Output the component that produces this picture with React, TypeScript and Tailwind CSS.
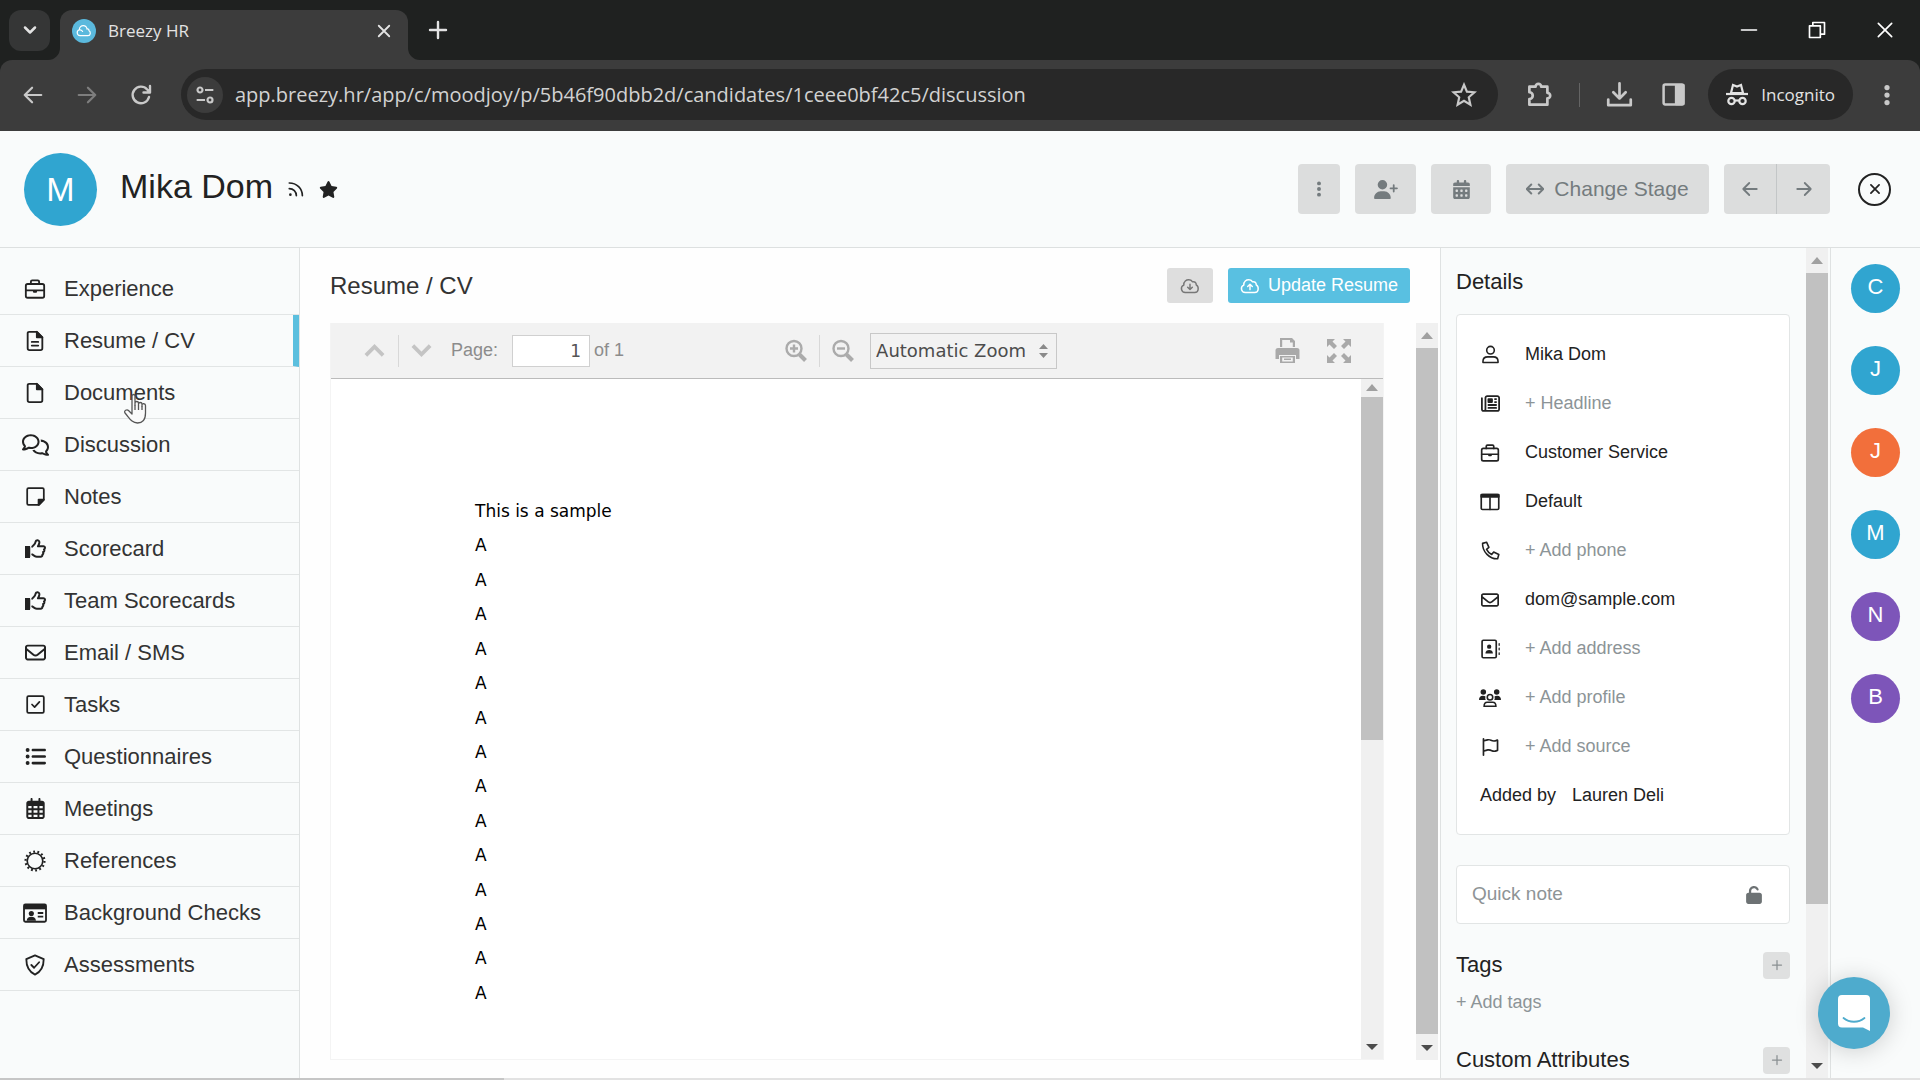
import type { ReactNode } from "react";
import {
  FaRegComments,
  FaRegThumbsUp,
  FaRegEnvelope,
  FaRegCalendarDays,
  FaCalendarDays,
  FaListUl,
  FaRegNewspaper,
  FaRegFlag,
  FaUserPlus,
  FaUnlock,
  FaStar,
  FaEllipsisVertical,
} from "react-icons/fa6";

interface IconProps {
  className?: string;
}

interface LineIconProps extends IconProps {
  children: ReactNode;
  width?: number;
}

// Outlined icons share one 24x24 frame
function LineIcon({ className = "w-6 h-6", children, width = 2 }: Readonly<LineIconProps>) {
  return (
    <svg
      className={className}
      viewBox="0 0 24 24"
      fill="none"
      stroke="currentColor"
      strokeWidth={width}
      strokeLinecap="round"
      strokeLinejoin="round"
      aria-hidden="true"
    >
      {children}
    </svg>
  );
}

const Briefcase = ({ className }: IconProps) => (
  <LineIcon className={className}>
    <rect x="2" y="6.5" width="20" height="15" rx="2" />
    <path d="M7.5 6.5V4A1.5 1.5 0 0 1 9 2.5h6A1.5 1.5 0 0 1 16.5 4v2.5M2 13.5h20" />
    <path d="M9.8 13.5h4.4v1.500a1 1 0 0 1-1 1h-2.400a1 1 0 0 1-1-1z" fill="currentColor" stroke="none" />
  </LineIcon>
);

const FileIcon = ({ className, lines }: IconProps & { lines?: boolean }) => (
  <LineIcon className={className}>
    <path d="M5.5 2H14l6 6v12a2 2 0 0 1-2 2H6a2 2 0 0 1-2-2V3.5A1.5 1.5 0 0 1 5.5 2z" />
    <path d="M14 2v6h6z" fill="currentColor" />
    {lines && <path d="M8.5 13h7M8.5 17h7" />}
  </LineIcon>
);

const NoteIcon = ({ className }: IconProps) => (
  <LineIcon className={className}>
    <path d="M4 2.5h16A1.5 1.5 0 0 1 21.5 4v12L16 21.5H4A1.5 1.5 0 0 1 2.5 20V4A1.5 1.5 0 0 1 4 2.5z" />
    <path d="M15.5 15.5h6l-6 6z" fill="currentColor" />
  </LineIcon>
);

// Outlined hand with a solid cuff
const ThumbIcon = () => (
  <span className="relative flex">
    <FaRegThumbsUp className="h-[21px] w-[21px]" />
    <span className="absolute bottom-px left-0 h-3 w-[5px] bg-current" />
  </span>
);

const TaskIcon = ({ className }: IconProps) => (
  <LineIcon className={className}>
    <rect x="2.5" y="2.5" width="19" height="19" rx="1.5" />
    <path d="m8 12 3 3 5.5-6" />
  </LineIcon>
);

// Toothed ring
const BadgeIcon = ({ className }: IconProps) => (
  <svg className={className} viewBox="0 0 24 24" fill="none" stroke="currentColor" aria-hidden="true">
    <circle cx="12" cy="12" r="8.5" strokeWidth="1.8" />
    <circle cx="12" cy="12" r="10.3" strokeWidth="2.4" strokeDasharray="2 2.623" />
  </svg>
);

const IdCardIcon = ({ className }: IconProps) => (
  <svg className={className} viewBox="0 0 28 24" fill="none" stroke="currentColor" strokeWidth="2" aria-hidden="true">
    <rect x="2" y="2.5" width="24" height="19" rx="1.5" />
    <path d="M2 3h24v5H2z" fill="currentColor" stroke="none" />
    <circle cx="10" cy="12.5" r="2.8" fill="currentColor" stroke="none" />
    <path d="M5 20.5c0-3 2-4.5 5-4.5s5 1.5 5 4.5z" fill="currentColor" stroke="none" />
    <path d="M17 12h6M17 16h6" />
  </svg>
);

const ShieldIcon = ({ className }: IconProps) => (
  <LineIcon className={className}>
    <path d="M12 1.5 21.5 5.500c0 8-3 14-9.500 17-6.500-3-9.500-9-9.500-17z" />
    <path d="m8 12 3 3 5.5-6" />
  </LineIcon>
);

const PersonIcon = ({ className }: IconProps) => (
  <LineIcon className={className}>
    <circle cx="12" cy="6.5" r="4.8" />
    <path d="M2.5 22v-1.5c0-3.5 2.5-5.5 6-5.500h7c3.500 0 6 2 6 5.500V22z" />
  </LineIcon>
);

const ColumnsIcon = ({ className }: IconProps) => (
  <LineIcon className={className}>
    <rect x="1.5" y="3" width="21" height="18" rx="1.5" />
    <path d="M1.5 3h21v3h-21z" fill="currentColor" />
    <path d="M12 7v14" />
  </LineIcon>
);

const PhoneIcon = ({ className }: IconProps) => (
  <LineIcon className={className}>
    <path d="M2 3 7 1.5 10 8 7 10.5c1.5 3 3.5 5 6.5 6.500L16 14l6.500 3L21 22.500C11 23 1.500 13.500 2 3z" />
  </LineIcon>
);

const ContactIcon = ({ className }: IconProps) => (
  <LineIcon className={className}>
    <rect x="2.5" y="1.5" width="17" height="21" rx="1.5" />
    <circle cx="11" cy="9.2" r="2.6" fill="currentColor" stroke="none" />
    <path d="M6.5 17.5c0-3 2-4.3 4.5-4.300s4.500 1.300 4.500 4.300z" fill="currentColor" stroke="none" />
    <path d="M23 5.5v2M23 11v2M23 16.5v2" strokeWidth="1.5" />
  </LineIcon>
);

const PeopleIcon = ({ className }: IconProps) => (
  <svg className={className} viewBox="0 0 28 24" fill="currentColor" aria-hidden="true">
    <circle cx="5.5" cy="4.5" r="3.5" />
    <circle cx="22.5" cy="4.5" r="3.5" />
    <path d="M0 14.5C0 11 1.5 9 5 9c1.5 0 2.5.3 3.3 1-.6 1.5-.5 3 .2 4.500zM28 14.500C28 11 26.500 9 23 9c-1.500 0-2.500.3-3.300 1 .6 1.500.5 3-.2 4.500z" />
    <g fill="none" stroke="currentColor" strokeWidth="2">
      <circle cx="14" cy="11" r="3.5" />
      <path d="M6.5 22.5c0-3.5 1.5-5 4-5h7c2.5 0 4 1.5 4 5z" />
    </g>
  </svg>
);

const RssIcon = ({ className }: IconProps) => (
  <LineIcon className={className} width={2.2}>
    <circle cx="4.5" cy="19.5" r="1.8" fill="currentColor" stroke="none" />
    <path d="M3 11.5c5.5 0 9.5 4 9.5 9.500M3 4c10 0 17.500 7.500 17.500 17" />
  </LineIcon>
);

const ArrowIcon = ({ className, right }: IconProps & { right?: boolean }) => (
  <LineIcon className={className} width={2.4}>
    {right ? <path d="M3 12h18M13 4l8 8-8 8" /> : <path d="M21 12H3M11 4l-8 8 8 8" />}
  </LineIcon>
);

const CloudIcon = ({ className, up }: IconProps & { up?: boolean }) => (
  <svg
    className={className}
    viewBox="0 0 26 22"
    fill="none"
    stroke="currentColor"
    strokeWidth="2"
    strokeLinecap="round"
    strokeLinejoin="round"
    aria-hidden="true"
  >
    <path d="M6.5 20A5.3 5.3 0 0 1 4.500 9.800C4 5 8 2 12 2.500c2 .2 3.500 1.200 4.500 2.800 3-.8 5.500 1.200 5 4.200 4 2 4 10.500-2 10.500z" />
    {up ? <path d="M13 16V9M9.800 11.800 13 8.600l3.200 3.200" /> : <path d="M13 8.500v7M9.800 12.700 13 15.900l3.200-3.200" />}
  </svg>
);

const MagnifierIcon = ({ plus }: { plus?: boolean }) => (
  <svg className="w-6 h-6" viewBox="0 0 24 24" fill="none" stroke="currentColor" aria-hidden="true">
    <circle cx="10" cy="9.5" r="7.5" strokeWidth="2.4" />
    <path d="m15.5 15.5 6 6" strokeWidth="4" />
    <path d={plus ? "M6 9.5h8M10 5.5v8" : "M6 9.5h8"} strokeWidth="2.4" />
  </svg>
);

const PrinterIcon = () => (
  <svg className="h-[27px] w-[25px]" viewBox="0 0 25 27" fill="currentColor" aria-hidden="true">
    <path d="M5 10V1h12l3 3v6h-2.200V5.500H15V3H7.200v7zM3 11h19a2.500 2.500 0 0 1 2.500 2.500V22H21v-4H4v4H.5v-8.500A2.500 2.500 0 0 1 3 11z" />
    <path d="M5 19h15v7H5zm2.200 1.500v4h10.600v-4z" fillRule="evenodd" />
    <path d="M9 21.500h7v1.500H9z" />
  </svg>
);

const CloudLogo = () => (
  <span className="flex w-6 h-6 items-center justify-center rounded-full bg-[#5bb9dd] text-white">
    <svg className="w-4 h-4" viewBox="0 0 24 24" fill="none" stroke="currentColor" strokeWidth="1.8" aria-hidden="true">
      <path d="M6 19a4.500 4.500 0 0 1-1-8.800C5 6 8 4 11 4c3 0 5 2 5.500 5 2-.3 3 .7 3 2.500 3 1.500 2.500 7.500-1.500 7.500zM5 10.500c2-.5 4.500.5 5 3" />
    </svg>
  </span>
);

const sections = [
  { label: "Experience", icon: <Briefcase className="w-[22px] h-[22px]" /> },
  { label: "Resume / CV", icon: <FileIcon lines className="w-[22px] h-[22px]" />, active: true },
  { label: "Documents", icon: <FileIcon className="w-[22px] h-[22px]" />, pointer: true },
  { label: "Discussion", icon: <FaRegComments className="w-[27px] h-6" /> },
  { label: "Notes", icon: <NoteIcon className="w-[21px] h-[21px]" /> },
  { label: "Scorecard", icon: <ThumbIcon /> },
  { label: "Team Scorecards", icon: <ThumbIcon /> },
  { label: "Email / SMS", icon: <FaRegEnvelope className="w-[21px] h-[21px]" /> },
  { label: "Tasks", icon: <TaskIcon className="w-[21px] h-[21px]" /> },
  { label: "Questionnaires", icon: <FaListUl className="w-[21px] h-[21px]" /> },
  { label: "Meetings", icon: <FaRegCalendarDays className="w-[21px] h-[21px]" /> },
  { label: "References", icon: <BadgeIcon className="w-[22px] h-[22px]" /> },
  { label: "Background Checks", icon: <IdCardIcon className="w-[26px] h-[22px]" /> },
  { label: "Assessments", icon: <ShieldIcon className="w-[22px] h-[22px]" /> },
];

const details = [
  { label: "Mika Dom", icon: <PersonIcon className="w-[19px] h-[19px]" />, filled: true },
  { label: "+ Headline", icon: <FaRegNewspaper className="w-[19px] h-[19px]" /> },
  { label: "Customer Service", icon: <Briefcase className="w-5 h-5" />, filled: true },
  { label: "Default", icon: <ColumnsIcon className="w-5 h-5" />, filled: true },
  { label: "+ Add phone", icon: <PhoneIcon className="w-[19px] h-[19px]" /> },
  { label: "dom@sample.com", icon: <FaRegEnvelope className="w-[18px] h-[18px]" />, filled: true },
  { label: "+ Add address", icon: <ContactIcon className="w-5 h-5" /> },
  { label: "+ Add profile", icon: <PeopleIcon className="w-[22px] h-5" /> },
  { label: "+ Add source", icon: <FaRegFlag className="w-[17px] h-[18px]" /> },
];

const candidates = [
  { initial: "C", color: "bg-[#30a5d0]" },
  { initial: "J", color: "bg-[#30a5d0]" },
  { initial: "J", color: "bg-[#f26f3b]" },
  { initial: "M", color: "bg-[#30a5d0]" },
  { initial: "N", color: "bg-[#7d55b9]" },
  { initial: "B", color: "bg-[#7d55b9]" },
];

const resumeLines = ["This is a sample", ...Array<string>(14).fill("A")];

interface ScrollbarProps {
  thumb: string;
  compact?: boolean;
  className?: string;
}

function Scrollbar({ thumb, compact, className = "" }: Readonly<ScrollbarProps>) {
  return (
    <div className={`flex w-[22px] shrink-0 flex-col bg-[#f0f0f0] ${className}`}>
      <svg
        className={`w-full text-[#a0a0a0] ${compact ? "h-[18px]" : "h-[25px]"}`}
        viewBox={compact ? "0 4 22 18" : "0 0 22 25"}
        aria-hidden="true"
      >
        <path d="M11 9l6 7H5z" fill="currentColor" />
      </svg>
      <div className="min-h-0 flex-1">
        <div className={`bg-[#c1c1c1] ${thumb}`} />
      </div>
      <svg className="h-[26px] w-full text-[#4c4c4c]" viewBox="0 0 22 26" aria-hidden="true">
        <path d="M11 17l6-6H5z" fill="currentColor" />
      </svg>
    </div>
  );
}

function BrowserChrome() {
  return (
    <div className="shrink-0 bg-[#1f2120] font-['Open_Sans','Noto_Sans',sans-serif] text-[#e3e3e3]">
      {/* Tab strip */}
      <div className="flex h-[60px] items-center">
        <button type="button" aria-label="Search tabs" className="ml-[9px] flex h-[41px] w-[41px] items-center justify-center rounded-xl bg-[#353636]">
          <LineIcon className="w-5 h-5" width={3}>
            <path d="m6 9 6 6 6-6" />
          </LineIcon>
        </button>
        <div className="relative ml-2.5 flex h-[50px] w-[348px] items-center self-end rounded-t-xl bg-[#3c3c3c] pr-[15px] pb-2 pl-3">
          <svg className="absolute bottom-0 -left-3 h-3 w-3 text-[#3c3c3c]" viewBox="0 0 12 12" aria-hidden="true">
            <path d="M12 0v12H0A12 12 0 0 0 12 0z" fill="currentColor" />
          </svg>
          <svg className="absolute -right-3 bottom-0 h-3 w-3 text-[#3c3c3c]" viewBox="0 0 12 12" aria-hidden="true">
            <path d="M0 0v12h12A12 12 0 0 1 0 0z" fill="currentColor" />
          </svg>
          <CloudLogo />
          <span className="ml-3 flex-1 text-[17px]">Breezy HR</span>
          <button type="button" aria-label="Close tab">
            <LineIcon className="w-[18px] h-[18px]" width={2.4}>
              <path d="M5 5l14 14M19 5 5 19" />
            </LineIcon>
          </button>
        </div>
        <button type="button" aria-label="New tab" className="ml-[18px]">
          <LineIcon className="w-6 h-6" width={2.4}>
            <path d="M12 4v16M4 12h16" />
          </LineIcon>
        </button>
        <div className="ml-auto flex items-center gap-12 pr-[25px] text-white">
          <button type="button" aria-label="Minimize">
            <LineIcon className="w-5 h-5">
              <path d="M3 12h18" />
            </LineIcon>
          </button>
          <button type="button" aria-label="Restore">
            <LineIcon className="w-5 h-5">
              <path d="M3 7h13v14H3zM7 7V3h14v14h-5" />
            </LineIcon>
          </button>
          <button type="button" aria-label="Close">
            <LineIcon className="w-5 h-5">
              <path d="M4 4l16 16M20 4 4 20" />
            </LineIcon>
          </button>
        </div>
      </div>

      {/* Address row */}
      <div className="flex h-[71px] items-center rounded-t-xl bg-[#3c3c3c] pb-0.5 pr-[21px] pl-[22px] text-[#c9c9c9]">
        <button type="button" aria-label="Back">
          <ArrowIcon className="w-[22px] h-[22px]" />
        </button>
        <button type="button" aria-label="Forward" className="ml-8 text-[#7e7e7e]">
          <ArrowIcon right className="w-[22px] h-[22px]" />
        </button>
        <button type="button" aria-label="Reload" className="ml-[31px]">
          <LineIcon className="w-6 h-6" width={2.4}>
            <path d="M20 14a8.300 8.300 0 1 1-1.800-7.500L20.500 9M21 3v6.500h-6.500" />
          </LineIcon>
        </button>
        <div className="ml-7 flex h-[51px] flex-1 items-center rounded-full bg-[#282828] pr-[21px] pl-1.5">
          <button type="button" aria-label="Site information" className="flex h-9 w-9 items-center justify-center rounded-full bg-[#3c3c3c]">
            <svg className="w-5 h-5" viewBox="0 0 24 24" fill="none" stroke="currentColor" strokeWidth="2.6" aria-hidden="true">
              <circle cx="6" cy="6" r="3" />
              <circle cx="18" cy="18" r="3" />
              <path d="M12 6h10M2 18h10" />
            </svg>
          </button>
          <input
            type="text"
            aria-label="Address"
            defaultValue="app.breezy.hr/app/c/moodjoy/p/5b46f90dbb2d/candidates/1ceee0bf42c5/discussion"
            className="ml-3 min-w-0 flex-1 text-[20px] text-[#d2d2d2]"
          />
          <button type="button" aria-label="Bookmark">
            <LineIcon className="w-[26px] h-[26px]">
              <path d="M12 2.5l2.700 6.400 6.900.6-5.200 4.600 1.500 6.800L12 17.300l-5.900 3.600 1.500-6.800-5.200-4.600 6.900-.6z" strokeLinejoin="miter" />
            </LineIcon>
          </button>
        </div>
        <button type="button" aria-label="Extensions" className="ml-7">
          <LineIcon className="w-[27px] h-[27px]" width={2.4}>
            <path d="M3 5h5.500a2.500 2.500 0 0 1 5 0H19v5.500a2.500 2.500 0 0 1 0 5V21H3v-5a3 3 0 0 0 0-6z" />
          </LineIcon>
        </button>
        <span className="ml-[26px] h-6 w-px bg-[#646464]" />
        <button type="button" aria-label="Downloads" className="ml-[26px]">
          <LineIcon className="w-[27px] h-[27px]" width={2.4}>
            <path d="M12 2v13M6.500 10l5.500 5.500 5.500-5.500M2 16.500v5h20v-5" />
          </LineIcon>
        </button>
        <button type="button" aria-label="Side panel" className="ml-7">
          <LineIcon className="w-[25px] h-[25px]" width={2.4}>
            <rect x="2.5" y="2.5" width="19" height="19" rx="1.5" />
            <path d="M14.500 3v18h7V3z" fill="currentColor" />
          </LineIcon>
        </button>
        <button type="button" className="ml-[22px] flex h-[51px] items-center rounded-full bg-[#282828] pr-[18px] pl-[17px] text-[#e3e3e3]">
          <svg className="w-6 h-6" viewBox="0 0 24 24" fill="none" stroke="currentColor" strokeWidth="2.2" aria-hidden="true">
            <path d="M1 11h22" />
            <path d="M6 10 8 2l4 1.500L16 2l2 8z" />
            <circle cx="6.5" cy="18" r="3.2" />
            <circle cx="17.5" cy="18" r="3.2" />
            <path d="M9.700 17.500h4.600" />
          </svg>
          <span className="ml-3 text-[17px]">Incognito</span>
        </button>
        <button type="button" aria-label="Browser menu" className="ml-[22px]">
          <FaEllipsisVertical className="w-6 h-6" />
        </button>
      </div>
    </div>
  );
}

function CandidateHeader() {
  return (
    <header className="flex h-[117px] shrink-0 items-center border-b border-[#dde0e0] bg-[#f9fbfb] pr-[29px] pl-6">
      <span className="flex h-[73px] w-[73px] items-center justify-center rounded-full bg-[#30a5d0] text-[34px] text-white">M</span>
      <h1 className="ml-[23px] pb-1.5 text-[34px] leading-10">Mika Dom</h1>
      <RssIcon className="ml-3.5 h-[18px] w-[18px]" />
      <FaStar className="ml-3.5 h-[19px] w-[19px]" />

      <div className="ml-auto flex items-center gap-[15px] text-[#747b7e]">
        <button type="button" aria-label="More" className="flex h-[50px] w-[42px] items-center justify-center rounded bg-[#dcdddd]">
          <FaEllipsisVertical className="h-[18px] w-[18px]" />
        </button>
        <button type="button" aria-label="Add person" className="flex h-[50px] w-[61px] items-center justify-center rounded bg-[#dcdddd]">
          <FaUserPlus className="h-[19px] w-6" />
        </button>
        <button type="button" aria-label="Schedule" className="flex h-[50px] w-[60px] items-center justify-center rounded bg-[#dcdddd]">
          <FaCalendarDays className="h-[19px] w-[19px]" />
        </button>
        <button type="button" className="flex h-[50px] w-[203px] items-center justify-center gap-2.5 rounded bg-[#dcdddd] text-[21px]">
          <LineIcon className="h-[18px] w-[18px]" width={2.6}>
            <path d="M1.500 12h21M7 6l-6 6 6 6M17 6l6 6-6 6" />
          </LineIcon>
          Change Stage
        </button>
        <div className="flex h-[50px] rounded bg-[#dcdddd]">
          <button type="button" aria-label="Previous candidate" className="flex w-[53px] items-center justify-center border-r border-[#c3c6c7]">
            <ArrowIcon className="h-[18px] w-[18px]" />
          </button>
          <button type="button" aria-label="Next candidate" className="flex w-[53px] items-center justify-center">
            <ArrowIcon right className="h-[18px] w-[18px]" />
          </button>
        </div>
      </div>
      <button type="button" aria-label="Close candidate" className="ml-7 flex h-[33px] w-[33px] items-center justify-center rounded-full border-2 border-[#222]">
        <LineIcon className="h-3.5 w-3.5" width={3}>
          <path d="M5 5l14 14M19 5 5 19" />
        </LineIcon>
      </button>
    </header>
  );
}

function HandCursor() {
  return (
    <svg className="absolute top-[26px] left-[123px] h-8 w-7" viewBox="0 0 28 32" fill="#fafafa" stroke="#555" strokeWidth="1.3" strokeLinejoin="round" aria-hidden="true">
      <path d="M9 17V3c0-2 3-2 3 0v9-2c0-2 3.500-2 3.500 0v2-1c0-2 3.500-2 3.500 0v2-1c0-2 3.500-1.500 3.500.5V20c0 7-3 10-8 10-6 0-8-5-12.500-10C.5 17.500 4 16 5.500 17.500L9 21z" />
      <path d="M12 12v5M15.500 12v5M19 13v4" />
    </svg>
  );
}

function SectionNav() {
  return (
    <nav className="w-[300px] shrink-0 border-r border-[#dfe2e2] bg-[#f9fbfb] pt-[15px]">
      {sections.map((section) => (
        <a
          key={section.label}
          href="#"
          className={`relative flex h-[52px] items-center border-b border-b-[#e2e5e5] pl-5 text-[22px] text-[#333] ${
            section.active ? "border-r-6 border-r-[#5bbfde]" : ""
          }`}
        >
          <span className="flex w-[30px] justify-center text-[#222]">{section.icon}</span>
          <span className="ml-3.5">{section.label}</span>
          {section.pointer && <HandCursor />}
        </a>
      ))}
    </nav>
  );
}

function ResumeViewer() {
  return (
    <div className="flex min-w-0 flex-1 flex-col border border-t-0 border-[#f4f4f4]">
      <div className="flex h-14 shrink-0 items-center border-b border-[#bbb] bg-[#f2f2f2] pr-[31px] pl-8 text-[#8c8c8c]">
        <button type="button" aria-label="Previous page" className="text-[#c4c4c4]">
          <LineIcon className="h-[23px] w-[23px]" width={4}>
            <path d="m3 17 9-9 9 9" strokeLinecap="butt" strokeLinejoin="miter" />
          </LineIcon>
        </button>
        <span className="ml-3 h-8 w-px bg-[#d8d8d8]" />
        <button type="button" aria-label="Next page" className="ml-[11px] text-[#c4c4c4]">
          <LineIcon className="h-[23px] w-[23px]" width={4}>
            <path d="m3 7 9 9 9-9" strokeLinecap="butt" strokeLinejoin="miter" />
          </LineIcon>
        </button>
        <label htmlFor="page-number" className="ml-[18px] text-[18px]">Page:</label>
        <input
          id="page-number"
          type="text"
          defaultValue="1"
          className="ml-[14px] h-8 w-[78px] border border-[#d0d0d0] bg-white pr-2 text-right font-['DejaVu_Sans',sans-serif] text-[17px] text-[#555]"
        />
        <span className="ml-1 text-[18px]">of 1</span>

        <div className="ml-[160px] flex items-center text-[#ababab]">
          <button type="button" aria-label="Zoom in">
            <MagnifierIcon plus />
          </button>
          <span className="ml-[11px] h-8 w-px bg-[#d8d8d8]" />
          <button type="button" aria-label="Zoom out" className="ml-[11px]">
            <MagnifierIcon />
          </button>
        </div>
        <div className="relative ml-[15px]">
          <select
            aria-label="Zoom"
            className="h-9 w-[187px] appearance-none border border-[#c8c8c8] bg-[#f2f2f2] pl-[5px] font-['DejaVu_Sans',sans-serif] text-[18px] text-[#4c4c4c]"
          >
            <option>Automatic Zoom</option>
          </select>
          <svg className="pointer-events-none absolute top-2.5 right-[9px] h-4 w-[9px]" viewBox="0 0 9 16" fill="#8a8a8a" aria-hidden="true">
            <path d="M4.500 1 9 6H0zM4.500 15 9 10H0z" />
          </svg>
        </div>

        <div className="ml-auto flex items-center gap-[26px] text-[#a9a9a9]">
          <button type="button" aria-label="Print">
            <PrinterIcon />
          </button>
          <button type="button" aria-label="Full screen">
            <svg className="h-[26px] w-[26px]" viewBox="0 0 26 26" fill="currentColor" aria-hidden="true">
              <path d="M1 1h8L6.500 3.500l4.500 4.500-3 3L3.500 6.500 1 9zM25 1v8l-2.500-2.500L18 11l-3-3 4.500-4.500L17 1zM1 25v-8l2.500 2.500L8 15l3 3-4.500 4.500L9 25zM25 25h-8l2.500-2.500L15 18l3-3 4.500 4.500L25 17z" />
            </svg>
          </button>
        </div>
      </div>

      <div className="flex min-h-0 flex-1">
        <div className="flex-1 bg-white pt-[118px] pl-[144px]">
          <div className="flex h-[510px] flex-col justify-between font-['DejaVu_Sans',sans-serif] text-[17px] leading-7 text-black">
            {resumeLines.map((line, i) => (
              <p key={i}>{line}</p>
            ))}
          </div>
        </div>
        <Scrollbar compact thumb="h-[54%]" />
      </div>
    </div>
  );
}

function ResumeSection() {
  return (
    <main className="flex min-w-0 flex-1 flex-col bg-[#fefefe] pt-5 pb-[18px] pl-[30px]">
      <div className="flex items-center pr-[30px]">
        <h2 className="text-[24px] leading-[35px] text-[#333]">Resume / CV</h2>
        <button type="button" aria-label="Download resume" className="ml-auto flex h-[35px] w-[46px] items-center justify-center rounded-[3px] bg-[#dedede] text-[#777]">
          <CloudIcon className="h-4 w-5" />
        </button>
        <button type="button" className="ml-[15px] flex h-[35px] w-[182px] items-center justify-center gap-2 rounded-[3px] bg-[#59c0e1] text-[18px] text-white">
          <CloudIcon up className="h-4 w-5" />
          Update Resume
        </button>
      </div>
      <div className="mt-5 flex min-h-0 flex-1 gap-8 pr-0.5">
        <ResumeViewer />
        <Scrollbar thumb="h-full" />
      </div>
    </main>
  );
}

function AddButton({ label }: Readonly<{ label: string }>) {
  return (
    <button type="button" aria-label={label} className="flex h-[27px] w-[27px] items-center justify-center rounded bg-[#dfe0e0] text-[#8a8f91]">
      <LineIcon className="h-3 w-3" width={2.5}>
        <path d="M12 3v18M3 12h18" />
      </LineIcon>
    </button>
  );
}

function DetailsPanel() {
  return (
    <aside className="flex w-[390px] shrink-0 overflow-hidden border-l border-[#dfe2e2] bg-[#f9fbfb]">
      <div className="min-w-0 flex-1 pt-5 pr-4 pl-[15px]">
        <h2 className="text-[22px] leading-7">Details</h2>
        <div className="mt-[18px] rounded border border-[#e2e5e5] bg-white pt-[15px] pb-3.5">
          {details.map((item) => (
            <div key={item.label} className="flex h-[49px] items-center pl-5">
              <span className="flex w-[26px] justify-center">{item.icon}</span>
              {item.filled ? (
                <span className="ml-[22px] text-[18px]">{item.label}</span>
              ) : (
                <button type="button" className="ml-[22px] text-[18px] text-[#8c9497]">{item.label}</button>
              )}
            </div>
          ))}
          <div className="flex h-[49px] items-center gap-4 pl-[23px] text-[18px]">
            <span>Added by</span>
            <span>Lauren Deli</span>
          </div>
        </div>

        <div className="mt-[30px] flex h-[59px] items-center rounded border border-[#e2e5e5] bg-white pr-[26px] pl-[15px]">
          <input
            type="text"
            aria-label="Quick note"
            placeholder="Quick note"
            className="min-w-0 flex-1 text-[19px] placeholder:text-[#8e9496]"
          />
          <FaUnlock className="h-[18px] w-[18px] text-[#6d7274]" />
        </div>

        <div className="mt-[27px] flex items-center justify-between">
          <h2 className="text-[22px] leading-7">Tags</h2>
          <AddButton label="Add tag" />
        </div>
        <button type="button" className="mt-[11px] block text-[18px] leading-6 text-[#8c9497]">+ Add tags</button>
        <div className="mt-8 flex items-center justify-between">
          <h2 className="text-[22px] leading-7">Custom Attributes</h2>
          <AddButton label="Add attribute" />
        </div>
      </div>
      <Scrollbar thumb="h-[81%]" className="mr-0.5" />
    </aside>
  );
}

function CandidateRail() {
  return (
    <aside className="flex w-[90px] shrink-0 flex-col items-center gap-[33px] border-l border-[#dfe2e2] bg-[#f9fbfb] pt-4">
      {candidates.map((candidate, i) => (
        <a
          key={i}
          href="#"
          className={`flex h-[49px] w-[49px] items-center justify-center rounded-full pb-1 text-[22px] text-white ${candidate.color}`}
        >
          {candidate.initial}
        </a>
      ))}
    </aside>
  );
}

export default function App() {
  return (
    <div className="flex h-screen flex-col overflow-hidden bg-white font-['Liberation_Sans',Arial,sans-serif] text-[#222]">
      <BrowserChrome />
      <CandidateHeader />
      <div className="flex min-h-0 flex-1">
        <SectionNav />
        <ResumeSection />
        <DetailsPanel />
        <CandidateRail />
      </div>
      <div className="flex h-0.5 shrink-0 bg-[#e2e2e2]">
        <div className="w-[504px] bg-[#c6c6c6]" />
      </div>

      {/* Chat launcher */}
      <button
        type="button"
        aria-label="Open chat"
        className="absolute right-[30px] bottom-[31px] flex h-[72px] w-[72px] items-center justify-center rounded-full bg-[#4eabcd] shadow-[0_2px_24px_rgba(0,0,0,0.18)]"
      >
        <svg className="h-9 w-8" viewBox="0 0 32 36" aria-hidden="true">
          <path d="M4 0h24a4 4 0 0 1 4 4v32l-7-3.500H4a4 4 0 0 1-4-4V4a4 4 0 0 1 4-4z" fill="#fff" />
          <path d="M5.500 23c6 5 15 5 21 0" fill="none" stroke="#4eabcd" strokeWidth="1.800" strokeLinecap="round" />
        </svg>
      </button>
    </div>
  );
}
